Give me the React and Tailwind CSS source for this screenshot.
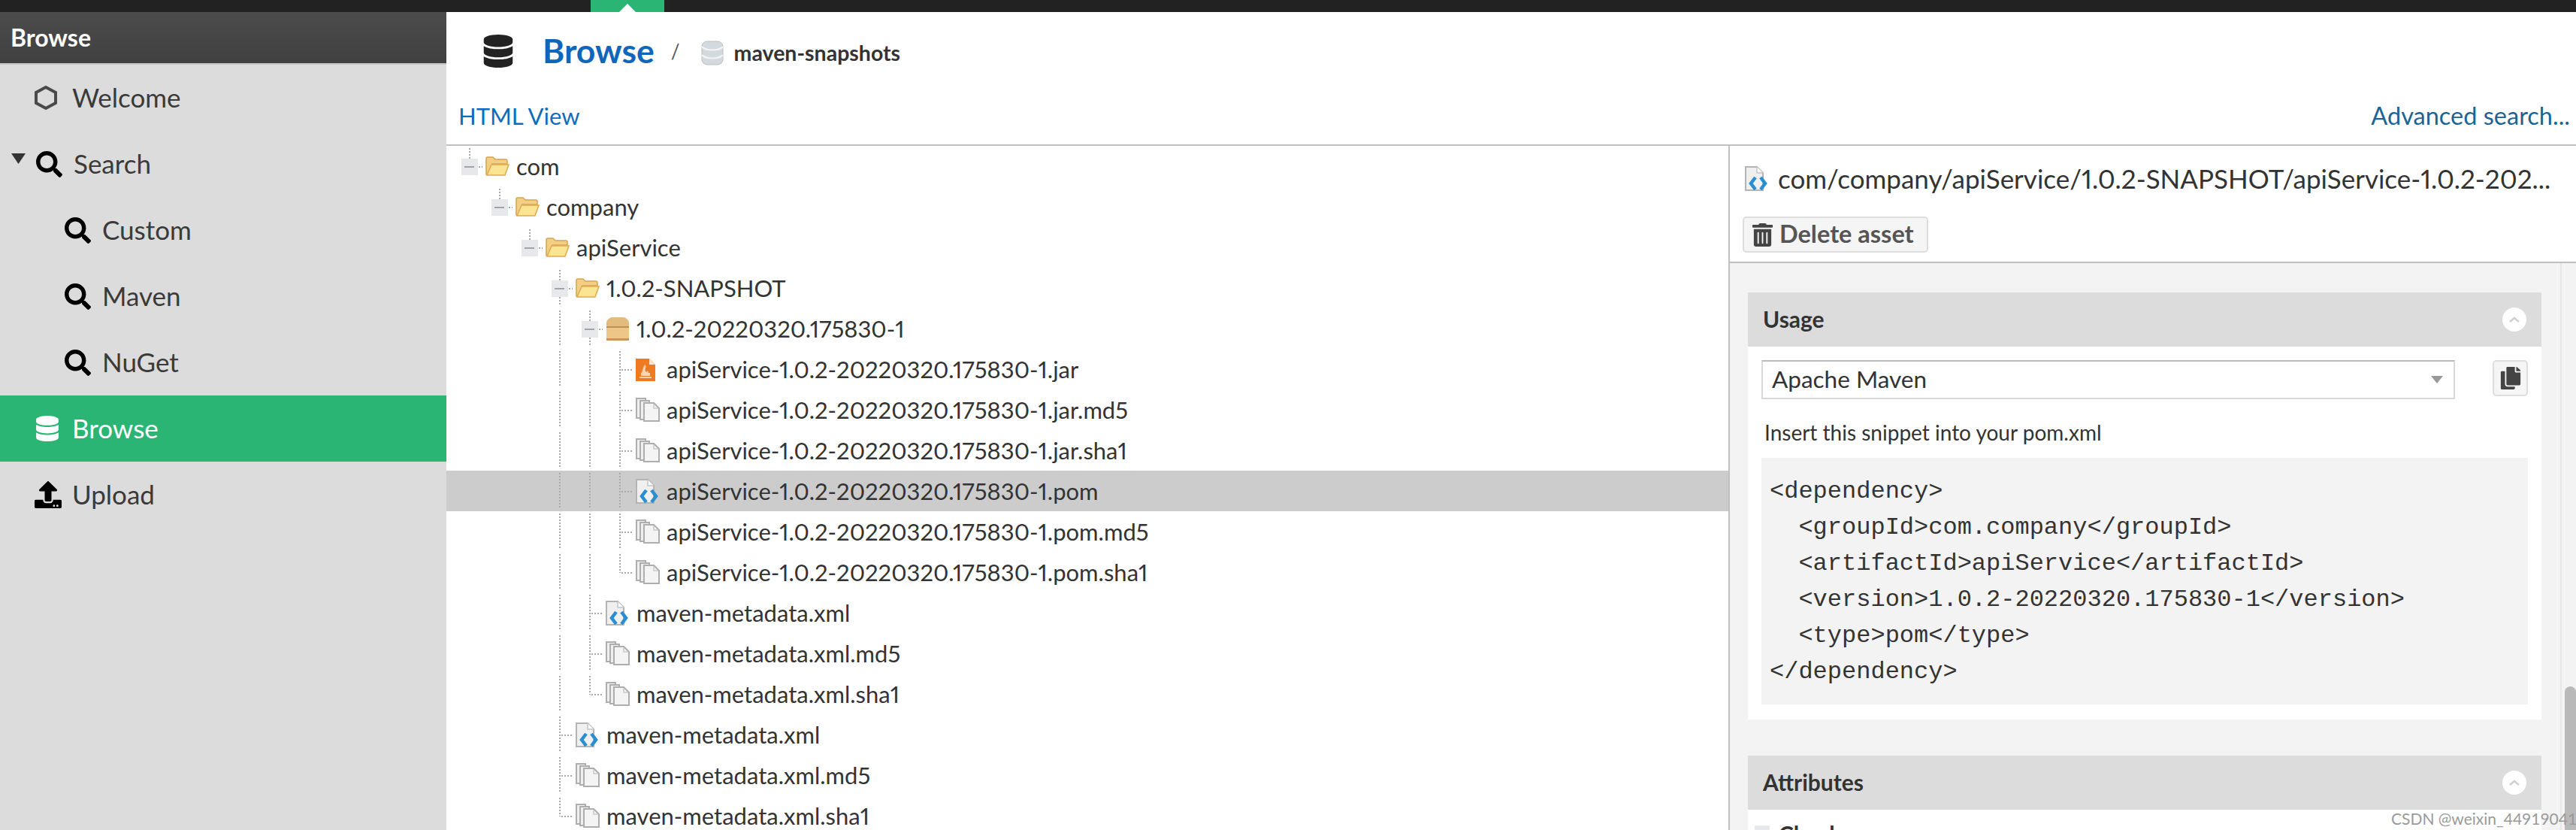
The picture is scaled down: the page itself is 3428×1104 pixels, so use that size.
import { FaCopy, FaDatabase, FaSearch, FaTrashAlt, FaUpload } from 'react-icons/fa';

const font = { fontFamily: 'Lato, "Open Sans", sans-serif' };

function Hexagon() {
  return (
    <svg width="30" height="32" viewBox="0 0 30 32" className="shrink-0">
      <polygon points="15,2 28,9 28,23 15,30 2,23 2,9" fill="none" stroke="#4a4a4a" strokeWidth="4" />
    </svg>
  );
}

function Caret() {
  return (
    <svg width="19" height="14" viewBox="0 0 19 14" className="shrink-0">
      <polygon points="0,0 19,0 9.5,14" fill="#333" />
    </svg>
  );
}

function NavItem({ icon, label, indent, active, caret }) {
  return (
    <div className={`h-[88px] flex items-center text-[35px] proportional-nums ${active ? 'bg-[#2ab574] text-white' : 'text-[#3a3a3a]'}`}>
      {caret ? (
        <div className="w-[48px] pl-[15px] -mt-[14px]"><Caret /></div>
      ) : (
        <div className={indent ? 'w-[86px]' : 'w-[46px]'} />
      )}
      <div className="w-[50px] flex items-center">{icon}</div>
      <span className="-mt-[2px]">{label}</span>
    </div>
  );
}

function Folder() {
  return (
    <svg width="32" height="26" viewBox="0 0 32 26">
      <path d="M1 24 V3 Q1 1 3 1 H10 L13 4 H27 Q29 4 29 6 V10 H9 L5 24 Z" fill="#f3cf86" stroke="#d9a351" strokeWidth="1.5" />
      <path d="M2 25 L8 11 H31 L26 25 Z" fill="#fbe492" stroke="#dfa950" strokeWidth="1.5" />
    </svg>
  );
}

function BoxIcon() {
  return (
    <svg width="32" height="32" viewBox="0 0 32 32">
      <path d="M1 31 V9 Q1 5 4 3 Q6 1 9 1 H23 Q26 1 28 3 Q31 5 31 9 V31 Z" fill="#e3bb7c" />
      <rect x="1" y="13" width="30" height="2" fill="#bf9152" />
      <rect x="1" y="15" width="30" height="14" fill="#ecc787" />
      <rect x="1" y="29" width="30" height="3" fill="#c8955a" />
    </svg>
  );
}

function JarIcon() {
  return (
    <svg width="26" height="31" viewBox="0 0 26 31">
      <path d="M0 1 H18 L26 9 V31 H0 Z" fill="#ef7a22" />
      <path d="M18 1 L26 9 H18 Z" fill="#fde3c8" />
      <path d="M12 9 C16 13 10 15 14 19 C16 16 17 18 17 20 H19 V24 H7 V20 C9 20 8 16 12 9 Z M5 25 H21 V27 H5 Z" fill="#fbd6b4" />
    </svg>
  );
}

function XmlIcon() {
  return (
    <svg width="31" height="33" viewBox="0 0 31 33">
      <path d="M1 1 H16 L24 9 V32 H1 Z" fill="#f0f0f0" stroke="#b4b4b4" strokeWidth="2" />
      <path d="M16 1 V9 H24" fill="#fff" stroke="#c4c4c4" strokeWidth="1.5" />
      <path d="M14 15 L8 23 L14 31 M21 15 L27 23 L21 31" fill="none" stroke="#2a8fd0" strokeWidth="4.5" />
    </svg>
  );
}

function DocsIcon() {
  return (
    <svg width="32" height="32" viewBox="0 0 32 32">
      <path d="M1 1 H13 V27 H1 Z" fill="#efefef" stroke="#aeaeae" strokeWidth="2" />
      <path d="M6 4 H18 V29 H6 Z" fill="#efefef" stroke="#aeaeae" strokeWidth="2" />
      <path d="M11 7 H24 L31 14 V31 H11 Z" fill="#f4f4f4" stroke="#aeaeae" strokeWidth="2" />
      <path d="M24 8 V14 H30" fill="none" stroke="#c8c8c8" strokeWidth="1.5" />
    </svg>
  );
}

const DOT = { stroke: '#a9a9a9', strokeWidth: 2, strokeDasharray: '2 2' };

// one 40px wide connector cell of the tree
function Elbow({ type }) {
  const exp = type === 'minus' || type === 'minusEnd';
  return (
    <svg width="40" height="54" viewBox="0 0 40 54" className="shrink-0">
      {type === 'line' && <line x1="19" x2="19" y1="3" y2="49" {...DOT} />}
      {type === 'tee' && <line x1="19" x2="19" y1="3" y2="49" {...DOT} />}
      {type === 'end' && <line x1="19" x2="19" y1="3" y2="28" {...DOT} />}
      {(type === 'tee' || type === 'end') && <line x1="21" x2="35" y1="28" y2="28" {...DOT} />}
      {exp && <line x1="19" x2="19" y1="3" y2="17" {...DOT} />}
      {type === 'minus' && <line x1="19" x2="19" y1="39" y2="49" {...DOT} />}
      {exp && (
        <>
          <rect x="8" y="17" width="22" height="22" fill="#e6e8ec" />
          <rect x="12" y="27" width="13" height="2" fill="#a3a3a3" />
          <line x1="31" x2="36" y1="28" y2="28" {...DOT} />
        </>
      )}
    </svg>
  );
}

const B = 'blank';
const L = 'line';
const JAR = 'apiService-1.0.2-20220320.175830-1';

const rows = [
  { cells: ['minusEnd'], icon: 'folder', label: 'com' },
  { cells: [B, 'minusEnd'], icon: 'folder', label: 'company' },
  { cells: [B, B, 'minusEnd'], icon: 'folder', label: 'apiService' },
  { cells: [B, B, B, 'minus'], icon: 'folder', label: '1.0.2-SNAPSHOT' },
  { cells: [B, B, B, L, 'minus'], icon: 'box', label: '1.0.2-20220320.175830-1' },
  { cells: [B, B, B, L, L, 'tee'], icon: 'jar', label: JAR + '.jar' },
  { cells: [B, B, B, L, L, 'tee'], icon: 'docs', label: JAR + '.jar.md5' },
  { cells: [B, B, B, L, L, 'tee'], icon: 'docs', label: JAR + '.jar.sha1' },
  { cells: [B, B, B, L, L, 'tee'], icon: 'xml', label: JAR + '.pom', selected: true },
  { cells: [B, B, B, L, L, 'tee'], icon: 'docs', label: JAR + '.pom.md5' },
  { cells: [B, B, B, L, L, 'end'], icon: 'docs', label: JAR + '.pom.sha1' },
  { cells: [B, B, B, L, 'tee'], icon: 'xml', label: 'maven-metadata.xml' },
  { cells: [B, B, B, L, 'tee'], icon: 'docs', label: 'maven-metadata.xml.md5' },
  { cells: [B, B, B, L, 'end'], icon: 'docs', label: 'maven-metadata.xml.sha1' },
  { cells: [B, B, B, 'tee'], icon: 'xml', label: 'maven-metadata.xml' },
  { cells: [B, B, B, 'tee'], icon: 'docs', label: 'maven-metadata.xml.md5' },
  { cells: [B, B, B, 'end'], icon: 'docs', label: 'maven-metadata.xml.sha1' },
];

const icons = {
  folder: <Folder />,
  box: <BoxIcon />,
  jar: <JarIcon />,
  xml: <XmlIcon />,
  docs: <DocsIcon />,
};

function TreeRow({ row }) {
  return (
    <div className={`h-[54px] shrink-0 flex items-center pl-[12px] text-[31px] proportional-nums text-[#333] ${row.selected ? 'bg-[#cccccc]' : ''}`}>
      {row.cells.map((c, i) => <Elbow key={i} type={c} />)}
      <div className="w-[41px] flex items-center shrink-0">{icons[row.icon]}</div>
      <span className="whitespace-nowrap">{row.label}</span>
    </div>
  );
}

function PanelHeader({ title }) {
  return (
    <div className="h-[72px] bg-[#dcdcdc] flex items-center justify-between pl-[20px] pr-[20px]">
      <span className="text-[30px] font-bold text-[#333] -mt-[2px]">{title}</span>
      <div className="w-[32px] h-[32px] rounded-full bg-white flex items-center justify-center">
        <svg width="16" height="10" viewBox="0 0 16 10">
          <path d="M2 8 L8 3 L14 8" fill="none" stroke="#d0d0d0" strokeWidth="2.5" />
        </svg>
      </div>
    </div>
  );
}

const code = `<dependency>
  <groupId>com.company</groupId>
  <artifactId>apiService</artifactId>
  <version>1.0.2-20220320.175830-1</version>
  <type>pom</type>
</dependency>`;

export default function App() {
  return (
    <div className="h-screen w-full overflow-hidden flex flex-col bg-white" style={font}>
      {/* Top bar */}
      <div className="h-4 shrink-0 bg-[#222222] flex">
        <div className="ml-[786px] w-[98px] bg-[#2ab574] flex items-end justify-center">
          <svg width="22" height="11" viewBox="0 0 22 11"><polygon points="11,0 22,11 0,11" fill="#fff" /></svg>
        </div>
      </div>

      <div className="flex-1 flex min-h-0">
        {/* Sidebar */}
        <aside className="w-[594px] shrink-0 bg-[#dcdcdc]">
          <div className="h-[70px] bg-gradient-to-b from-[#4c4c4c] to-[#404040] border-b-2 border-[#c4c4c4] flex items-center pl-[14px] text-[32px] font-bold text-white">
            Browse
          </div>
          <NavItem icon={<Hexagon />} label="Welcome" />
          <NavItem icon={<FaSearch size={35} color="#000" />} label="Search" caret />
          <NavItem icon={<FaSearch size={35} color="#000" />} label="Custom" indent />
          <NavItem icon={<FaSearch size={35} color="#000" />} label="Maven" indent />
          <NavItem icon={<FaSearch size={35} color="#000" />} label="NuGet" indent />
          <NavItem icon={<FaDatabase size={34} color="#fff" />} label="Browse" active />
          <NavItem icon={<FaUpload size={36} color="#000" />} label="Upload" />
        </aside>

        <main className="flex-1 min-w-0 flex flex-col">
          {/* Page title */}
          <div className="h-[104px] shrink-0 flex items-center pl-[47px]">
            <FaDatabase size={44} color="#222" className="shrink-0" />
            <span className="ml-[37px] -mt-[2px] text-[44.5px] font-bold text-[#0f67bb]">Browse</span>
            <span className="ml-[22px] text-[26px] text-[#555]">/</span>
            <svg width="30" height="33" viewBox="0 0 30 33" className="ml-[28px] mt-[4px]">
              <rect x="1" y="1" width="28" height="31" rx="7" fill="#d4d9dd" stroke="#b8bec3" />
              <path d="M1 8 C6 14 24 14 29 8 M1 19 C6 25 24 25 29 19" fill="none" stroke="#f3f4f5" strokeWidth="2" />
            </svg>
            <span className="ml-[14px] mt-[4px] text-[28.5px] font-bold text-[#333]">maven-snapshots</span>
          </div>

          {/* Toolbar */}
          <div className="h-[74px] shrink-0 border-b-2 border-[#c0c0c0] flex items-center justify-between pl-[16px] pr-[8px] pb-[4px] text-[31px]">
            <span className="text-[#0f6cbd]">HTML View</span>
            <span className="text-[32.5px] text-[#1a6496]">Advanced search...</span>
          </div>

          <div className="flex-1 min-h-0 flex">
            {/* Tree */}
            <div className="w-[1708px] shrink-0 border-r-2 border-[#c0c0c0] flex flex-col overflow-hidden">
              {rows.map((r, i) => <TreeRow key={i} row={r} />)}
            </div>

            {/* Asset detail */}
            <div className="flex-1 min-w-0 flex flex-col overflow-hidden">
              <div className="h-[156px] shrink-0 border-b-2 border-[#c0c0c0]">
                <div className="h-[86px] mb-[8px] flex items-center pl-[20px]">
                  <div className="w-[44px] shrink-0"><XmlIcon /></div>
                  <span className="text-[35px] proportional-nums text-[#333] whitespace-nowrap">com/company/apiService/1.0.2-SNAPSHOT/apiService-1.0.2-202...</span>
                </div>
                <button className="ml-[17px] h-[48px] w-[247px] flex items-center pl-[9px] gap-[7px] bg-[#f5f5f5] border-2 border-[#dddddd] rounded-[5px] text-[32.5px] font-bold text-[#555]">
                  <FaTrashAlt size={31} color="#444" />
                  <span className="-mt-[2px]">Delete asset</span>
                </button>
              </div>

              <div className="flex-1 min-h-0 flex bg-[#f3f3f3]">
                <div className="flex-1 min-w-0 pt-[39px] pl-[24px] pr-[25px] overflow-hidden">
                  {/* Usage */}
                  <PanelHeader title="Usage" />
                  <div className="bg-white pt-[18px] pl-[18px] pr-[18px] pb-[20px]">
                    <div className="flex items-start justify-between">
                      <div className="w-[923px] h-[52px] border-2 border-[#d8d8d8] border-t-[#bbbbbb] flex items-center justify-between pl-[12px] pr-[14px] text-[31.5px] text-[#333]">
                        Apache Maven
                        <svg width="16" height="10" viewBox="0 0 16 10"><polygon points="0,0 16,0 8,10" fill="#999" /></svg>
                      </div>
                      <div className="w-[47px] h-[48px] bg-[#f5f5f5] border-2 border-[#dddddd] rounded-[5px] flex items-center justify-center">
                        <FaCopy size={30} color="#444" />
                      </div>
                    </div>
                    <div className="mt-[24px] pl-[4px] h-[40px] flex items-center text-[28px] text-[#333]">
                      Insert this snippet into your pom.xml
                    </div>
                    <pre className="mt-[14px] h-[328px] bg-[#f3f3f3] pt-[21px] pl-[11px] text-[32px] leading-[48px] text-[#333]" style={{ fontFamily: '"Liberation Mono", monospace' }}>
                      {code}
                    </pre>
                  </div>

                  {/* Attributes */}
                  <div className="mt-[48px]">
                    <PanelHeader title="Attributes" />
                    <div className="bg-white h-[60px] flex items-start pl-[9px] pt-[18px]">
                      <div className="w-[20px] h-[20px] bg-[#e6e8ec] mt-[3px] mr-[12px]" />
                      <span className="text-[30px] font-bold text-[#333] leading-[28px]">Checksum</span>
                    </div>
                  </div>
                </div>

                {/* Scrollbar */}
                <div className="w-[21px] shrink-0 border-l-2 border-[#e8e8e8] flex flex-col pl-[4px]">
                  <div className="h-[563px] shrink-0" />
                  <div className="flex-1 bg-[#b9b9b9] rounded-t-full" />
                </div>
              </div>
            </div>
          </div>
        </main>
      </div>

      {/* Watermark */}
      <div className="absolute left-[3182px] top-[1073px] text-[21px] text-[#9a9a9a] whitespace-nowrap">CSDN @weixin_44919041</div>
    </div>
  );
}
